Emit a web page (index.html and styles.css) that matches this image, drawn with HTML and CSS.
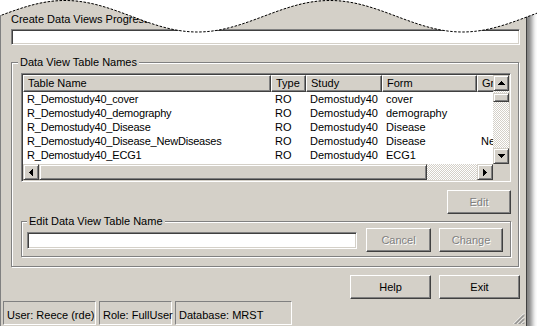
FILE: index.html
```html
<!DOCTYPE html>
<html lang="en">
<head>
    <meta charset="UTF-8">
    <title>Create Data Views</title>
    <link rel="stylesheet" href="styles.css">
</head>
<body>
    <div class="window">
        <div class="dialog">
            <div class="caption">Create Data Views Progress</div>
            <div class="progress"></div>

            <fieldset class="group tables">
                <legend>Data View Table Names</legend>
                <div class="listview">
                    <div class="lv-view">
                        <div class="lv-head">
                            <span>Table Name</span><span>Type</span><span>Study</span><span>Form</span><span>Group</span>
                        </div>
                        <div class="lv-row"><span>R_Demostudy40_cover</span><span>RO</span><span>Demostudy40</span><span>cover</span><span></span></div>
                        <div class="lv-row"><span>R_Demostudy40_demography</span><span>RO</span><span>Demostudy40</span><span>demography</span><span></span></div>
                        <div class="lv-row"><span>R_Demostudy40_Disease</span><span>RO</span><span>Demostudy40</span><span>Disease</span><span></span></div>
                        <div class="lv-row"><span>R_Demostudy40_Disease_NewDiseases</span><span>RO</span><span>Demostudy40</span><span>Disease</span><span>NewDiseases</span></div>
                        <div class="lv-row"><span>R_Demostudy40_ECG1</span><span>RO</span><span>Demostudy40</span><span>ECG1</span><span></span></div>
                        <div class="lv-row"><span>R_Demostudy40_Vitals</span><span>RO</span><span>Demostudy40</span><span>vitals</span><span></span></div>
                    </div>
                    <div class="vscroll">
                        <div class="sb-btn">
                            <svg width="7" height="4"><path d="M3 0h1v1h1v1h1v1h1v1H0V3h1V2h1V1h1z"/></svg>
                        </div>
                        <div class="sb-thumb v"></div>
                        <div class="sb-btn end">
                            <svg width="7" height="4"><path d="M0 0h7v1h-1v1h-1v1h-1v1h-1v-1h-1v-1h-1v-1h-1z"/></svg>
                        </div>
                    </div>
                    <div class="hscroll">
                        <div class="sb-btn">
                            <svg width="4" height="7"><path d="M3 0h1v7h-1v-1h-1v-1h-1v-1h-1v-1h1v-1h1v-1h1z"/></svg>
                        </div>
                        <div class="sb-thumb h"></div>
                        <div class="sb-btn end">
                            <svg width="4" height="7"><path d="M0 0h1v1h1v1h1v1h1v1h-1v1h-1v1h-1v1h-1z"/></svg>
                        </div>
                    </div>
                    <div class="sb-corner"></div>
                </div>

                <div class="edit-row">
                    <button class="btn edit" disabled>Edit</button>
                </div>

                <fieldset class="group rename">
                    <legend>Edit Data View Table Name</legend>
                    <div class="rename-fields">
                        <input type="text" class="field">
                        <button class="btn cancel" disabled>Cancel</button>
                        <button class="btn change" disabled>Change</button>
                    </div>
                </fieldset>
            </fieldset>

            <div class="actions">
                <button class="btn wide">Help</button>
                <button class="btn wide">Exit</button>
            </div>
        </div>

        <div class="statusbar">
            <span class="panel user">User: Reece (rde)</span>
            <span class="panel role">Role: FullUser</span>
            <span class="panel db">Database: MRST</span>
            <svg class="grip" width="12" height="12">
                <path d="M11 0.5L0.5 11M11 4.5L4.5 11M11 8.5L8.5 11" stroke="#fff"/>
                <path d="M11 1.5L1.5 11M11 2.5L2.5 11M11 5.5L5.5 11M11 6.5L6.5 11M11 9.5L9.5 11M11 10.5L10.5 11" stroke="#808080"/>
            </svg>
        </div>
    </div>

    <svg class="torn-edge" width="537" height="40" viewBox="0 0 537 40">
        <path class="torn-fill" d="M-68 -5L-68 32C-19.24 32 16.74 0 65 0C113.26 0 149.24 32 197.5 32C245.76 32 281.74 0 330 0C378.26 0 414.24 32 462.5 32C510.76 32 546.74 0 595 0L595 -5Z"/>
        <path class="torn-line" d="M-68 32C-19.24 32 16.74 0.5 65 0.5C113.26 0.5 149.24 32 197.5 32C245.76 32 281.74 0.5 330 0.5C378.26 0.5 414.24 32 462.5 32C510.76 32 546.74 0.5 595 0.5"/>
    </svg>
</body>
</html>
```

FILE: styles.css
```css
* {
    box-sizing: border-box;
}

body {
    margin: 0;
    background: #fff;
    font-family: "Liberation Sans", Arial, sans-serif;
    font-size: 11px;
    line-height: 13px;
    color: #000;
}

.window {
    width: 527px;
    background: #d4d0c8;
    border-left: 1px solid #808080;
    border-right: 1px solid #404040;
    box-shadow: 5px 5px 5px rgba(0, 0, 0, 0.5);
}

.dialog {
    padding: 13px 6px 0 10px;
}

/* sunken 3d edge used by fields and the list */
.progress,
.field {
    background: #fff;
    border: 1px solid;
    border-color: #808080 #fff #fff #808080;
    box-shadow: inset 1px 1px #404040, inset -1px -1px #d4d0c8;
}

.progress {
    height: 16px;
    margin-top: 3px;
}

.group {
    margin: 0;
    min-width: 0;
    border: 1px solid #808080;
    box-shadow: inset 1px 1px #fff, 1px 1px #fff;
}

.group legend {
    padding: 0 2px;
    background: #d4d0c8;
    line-height: 13px;
}

.tables {
    width: 508px;
    margin-top: 11px;
    padding: 4px 7px 9px 9px;
}

.tables > legend {
    margin-left: -3px;
}

.listview {
    width: 490px;
    height: 109px;
    padding: 1px;
    border: 1px solid;
    border-color: #808080 #fff #fff #808080;
    box-shadow: inset 1px 1px #404040, inset -1px -1px #d4d0c8;
    display: grid;
    grid-template-columns: 470px 16px;
    grid-template-rows: 89px 16px;
}

.lv-view {
    overflow: hidden;
    background: #fff;
}

.lv-head,
.lv-row {
    display: grid;
    grid-template-columns: 248px 35px 76px 95px 60px;
    width: 514px;
}

.lv-head span {
    height: 17px;
    padding-left: 4px;
    line-height: 15px;
    background: #d4d0c8;
    border: 1px solid;
    border-color: #fff #404040 #404040 #fff;
    box-shadow: inset -1px -1px #808080;
    white-space: nowrap;
    overflow: hidden;
}

.lv-row span {
    height: 14px;
    padding-left: 4px;
    line-height: 14px;
    white-space: nowrap;
    overflow: hidden;
}

.lv-row span:first-child {
    letter-spacing: -0.2px;
}

.vscroll,
.hscroll {
    display: flex;
    background: repeating-conic-gradient(#fff 0 25%, #d4d0c8 0 50%) 0 0 / 2px 2px;
}

.vscroll {
    flex-direction: column;
}

.sb-btn,
.sb-thumb {
    background: #d4d0c8;
    border: 1px solid;
    border-color: #d4d0c8 #404040 #404040 #d4d0c8;
    box-shadow: inset 1px 1px #fff, inset -1px -1px #808080;
}

.sb-btn {
    width: 16px;
    height: 16px;
    flex: none;
    display: flex;
    align-items: center;
    justify-content: center;
}

.sb-btn svg {
    display: block;
}

.vscroll .sb-btn.end {
    margin-top: auto;
}

.hscroll .sb-btn.end {
    margin-left: auto;
}

.sb-thumb.v {
    height: 9px;
    margin-top: 2px;
}

.sb-thumb.h {
    width: 388px;
}

.sb-corner {
    background: #d4d0c8;
}

.btn {
    height: 24px;
    padding: 0;
    font-family: inherit;
    font-size: 11px;
    color: #000;
    background: #d4d0c8;
    border: 1px solid;
    border-color: #fff #404040 #404040 #fff;
    box-shadow: inset -1px -1px #808080;
}

.btn:disabled {
    color: #808080;
    text-shadow: 1px 1px #fff;
}

.edit-row {
    display: flex;
    justify-content: flex-end;
    margin-top: 8px;
}

.btn.edit {
    width: 64px;
}

.rename {
    margin-top: 1px;
    padding: 0 7px 4px 5px;
}

.rename-fields {
    display: flex;
    align-items: center;
    height: 24px;
}

.field {
    width: 330px;
    height: 17px;
    padding: 0 3px;
    margin: 0 9px 0 0;
    font: inherit;
    outline: none;
}

.btn.cancel {
    width: 65px;
    margin-right: 8px;
}

.btn.change {
    width: 64px;
}

.actions {
    display: flex;
    justify-content: flex-end;
    gap: 8px;
    margin-top: 8px;
}

.btn.wide {
    width: 81px;
}

.statusbar {
    display: flex;
    gap: 3px;
    padding: 2px 1px 1px 2px;
}

.panel {
    height: 24px;
    padding: 7px 0 0 3px;
    border: 1px solid;
    border-color: #808080 #fff #fff #808080;
    white-space: nowrap;
}

.user {
    width: 93px;
}

.role {
    width: 73px;
}

.db {
    width: 117px;
}

.grip {
    margin-left: auto;
    align-self: flex-end;
}

/* torn paper edge across the top of the capture */
.torn-edge {
    position: absolute;
    top: 0;
    left: 0;
    pointer-events: none;
}

.torn-fill {
    fill: #fff;
}

.torn-line {
    fill: none;
    stroke: #000;
    stroke-width: 1;
    stroke-dasharray: 2.5 1.5;
}
```
